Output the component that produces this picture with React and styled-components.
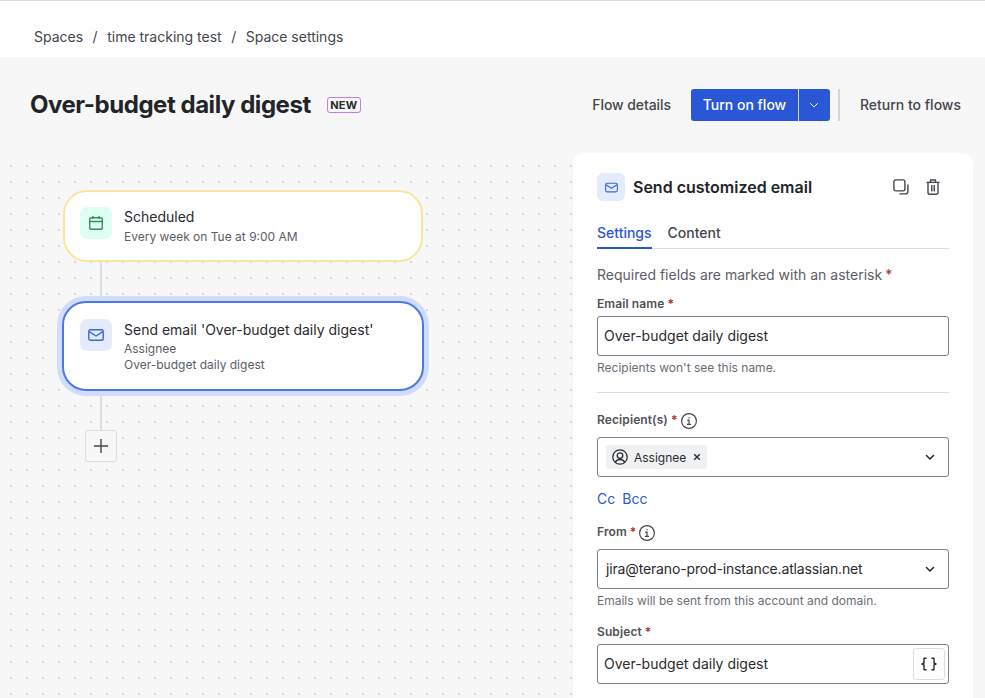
import React from 'react';
import styled, { createGlobalStyle } from 'styled-components';

const GlobalStyle = createGlobalStyle`
	html, body {
		margin: 0;
		padding: 0;
		height: 100%;
		overflow: hidden;
		background: #f7f7f7;
		font-family: Inter, "Noto Sans", sans-serif;
		color: #292a2e;
	}
	* {
		box-sizing: border-box;
	}
`;

const Page = styled.div`
	width: 985px;
	height: 698px;
	overflow: hidden;
	display: flex;
	flex-direction: column;
	background: #f7f7f7;
`;

const TopBar = styled.header`
	height: 57px;
	flex-shrink: 0;
	background: #fff;
	border-top: 1px solid #dddee1;
	padding: 27px 0 0 34px;
`;

const Breadcrumbs = styled.nav`
	display: flex;
	align-items: center;
	height: 18px;
	font-size: 14px;
	line-height: 18px;
	color: #44464d;
`;

const Slash = styled.span`
	margin: 0 9.5px;
`;

const TitleRow = styled.div`
	height: 96px;
	flex-shrink: 0;
	display: flex;
	align-items: flex-start;
	padding: 32px 24px 0 30px;
`;

const Title = styled.h1`
	margin: 0;
	font-size: 24px;
	line-height: 32px;
	font-weight: 700;
	letter-spacing: -0.46px;
	color: #232427;
`;

const NewBadge = styled.span`
	margin: 8px 0 0 16px;
	width: 34px;
	height: 16px;
	display: flex;
	align-items: center;
	justify-content: center;
	border: 1px solid #bf7fe8;
	border-radius: 3px;
	font-size: 11px;
	font-weight: 700;
	letter-spacing: 0.2px;
	color: #292a2e;
`;

const Actions = styled.div`
	margin-left: auto;
	display: flex;
	align-items: center;
	height: 32px;
`;

const TextAction = styled.span`
	padding-bottom: 2px;
	font-size: 14px;
	font-weight: 500;
	letter-spacing: ${(p) => (p.$tight ? '-0.08px' : '0')};
	color: #44464d;
`;

const SplitButton = styled.div`
	margin-left: 20px;
	display: flex;
	height: 32px;
	border-radius: 3px;
	overflow: hidden;
	background: #2a57d6;
	color: #fff;
`;

const SplitMain = styled.span`
	width: 108px;
	display: flex;
	align-items: center;
	justify-content: center;
	padding-bottom: 1px;
	font-size: 14px;
	font-weight: 500;
	border-right: 1px solid #c9d6f7;
`;

const SplitCaret = styled.span`
	width: 31px;
	padding-right: 1px;
	display: flex;
	align-items: center;
	justify-content: center;
`;

const Divider = styled.span`
	width: 2px;
	height: 32px;
	margin: 0 20px 0 8px;
	background: #d4d5d8;
`;

const Body = styled.main`
	flex: 1;
	min-height: 0;
	display: flex;
	align-items: stretch;
`;

const Canvas = styled.section`
	flex: 1;
	margin-top: 7px;
	padding: 30px 0 0 63px;
	display: flex;
	flex-direction: column;
	align-items: flex-start;
	background-image: radial-gradient(circle at 1px 1px, #d6d7da 1px, transparent 1.2px);
	background-size: 16px 16px;
	background-position: 10px 5px;
`;

const Node = styled.div`
	display: flex;
	gap: 12px;
	width: ${(p) => (p.$selected ? '362px' : '360px')};
	height: ${(p) => (p.$selected ? '90px' : '72px')};
	margin-left: ${(p) => (p.$selected ? '-1px' : '0')};
	padding: ${(p) => (p.$selected ? '16px' : '15px')} 16px 0;
	padding-left: ${(p) => (p.$selected ? '16px' : '15px')};
	border-radius: 24px;
	background: #fff;
	border: 2px solid ${(p) => (p.$selected ? '#4c78e6' : '#f8e6a0')};
	box-shadow: ${(p) => (p.$selected ? '0 0 0 5px #cfdcfb' : 'none')};
`;

const NodeIcon = styled.span`
	flex-shrink: 0;
	width: 32px;
	height: 32px;
	border-radius: 7px;
	display: flex;
	align-items: center;
	justify-content: center;
	background: ${(p) => p.$bg};
	color: ${(p) => p.$fg};
`;

const NodeText = styled.div`
	display: flex;
	flex-direction: column;
	margin-top: ${(p) => (p.$selected ? '1px' : '0')};
`;

const NodeTitle = styled.span`
	font-size: 14px;
	line-height: 20px;
	color: #292a2e;
	margin-bottom: ${(p) => (p.$selected ? '1px' : '2px')};
`;

const NodeSub = styled.span`
	font-size: 12px;
	line-height: 16px;
	color: #5c5e66;
`;

const Connector = styled.div`
	width: 2px;
	height: 39px;
	margin-left: 37px;
	background: #dcdde0;
`;

const AddButton = styled.button`
	width: 32px;
	height: 32px;
	margin-left: 22px;
	padding: 0;
	display: flex;
	align-items: center;
	justify-content: center;
	background: #f7f7f7;
	border: 1px solid #dcdde0;
	border-radius: 3px;
	color: #44464d;
`;

const Panel = styled.aside`
	width: 400px;
	margin: 0 12px 0 0;
	padding: 20px 24px 0;
	background: #fff;
	border-radius: 10px 10px 0 0;
	overflow: hidden;
`;

const PanelHead = styled.div`
	display: flex;
	align-items: center;
	height: 28px;
`;

const PanelIcon = styled.span`
	width: 28px;
	height: 28px;
	border-radius: 6px;
	display: flex;
	align-items: center;
	justify-content: center;
	background: #e4ecfc;
	color: #3a68dc;
`;

const PanelTitle = styled.h2`
	margin: 0 0 0 8px;
	font-size: 16px;
	line-height: 20px;
	font-weight: 600;
	color: #232427;
`;

const PanelTools = styled.div`
	margin-left: auto;
	margin-right: 8px;
	display: flex;
	gap: 16px;
	color: #44464d;
`;

const Tabs = styled.div`
	display: flex;
	gap: 16px;
	margin-top: 19px;
	height: 29px;
	border-bottom: 1px solid #dcdde0;
`;

const Tab = styled.span`
	height: 29px;
	padding-top: 4px;
	font-size: 14px;
	line-height: 18px;
	font-weight: 500;
	color: ${(p) => (p.$active ? '#2a57d6' : '#44464d')};
	border-bottom: ${(p) => (p.$active ? '2px solid #2a57d6' : 'none')};
`;

const Note = styled.p`
	margin: 16px 0 0;
	font-size: 14px;
	line-height: 20px;
	color: #5c5e66;
`;

const Star = styled.span`
	color: #ae2e24;
	margin-left: ${(p) => p.$gap || 3}px;
`;

const Label = styled.label`
	display: flex;
	align-items: center;
	height: 16px;
	margin-top: ${(p) => p.$top}px;
	font-size: 12px;
	font-weight: 600;
	letter-spacing: 0.1px;
	color: #505258;
`;

const InfoWrap = styled.span`
	display: flex;
	margin: 3px 0 0 3px;
	color: #44464d;
`;

const Field = styled.div`
	margin-top: ${(p) => p.$top || 5}px;
	height: 40px;
	display: flex;
	align-items: center;
	padding: 0 ${(p) => (p.$tight ? '3px' : '12px')} 0 ${(p) => p.$left || 6}px;
	border: 1px solid #7d818a;
	border-radius: 3px;
	font-size: 14px;
	color: #292a2e;
	background: #fff;
`;

const FieldValue = styled.span`
	padding-bottom: 2px;
	letter-spacing: ${(p) => p.$spacing || 0}px;
`;

const Caret = styled.span`
	margin-left: auto;
	display: flex;
	color: #292a2e;
`;

const Hint = styled.p`
	margin: 4px 0 0;
	font-size: 12px;
	line-height: 16px;
	color: #6b6e76;
`;

const Rule = styled.hr`
	margin: 16px 0 0;
	border: none;
	border-top: 1px solid #dcdde0;
`;

const Tag = styled.span`
	display: flex;
	align-items: center;
	height: 24px;
	padding: 0 6px;
	background: #f0f1f2;
	border-radius: 2px;
	font-size: 12px;
	color: #292a2e;
`;

const TagName = styled.span`
	margin: 0 7px 0 6px;
`;

const Links = styled.div`
	display: flex;
	gap: 7px;
	margin-top: 11px;
	height: 20px;
	align-items: center;
	font-size: 14px;
	color: #2a57d6;
`;

const BraceButton = styled.span`
	margin-left: auto;
	width: 32px;
	height: 32px;
	display: flex;
	align-items: center;
	justify-content: center;
	border: 1px solid #dcdde0;
	border-radius: 3px;
	color: #292a2e;
`;

const MailIcon = ({ size = 16 }) => (
	<svg width={size} height={size} viewBox="0 0 16 16" fill="none" stroke="currentColor" strokeWidth="1.4" strokeLinejoin="round">
		<rect x="0.8" y="2.7" width="14.4" height="10.6" rx="1.8" />
		<path d="M1.2 4.6 8 9l6.8-4.4" />
	</svg>
);

const CalendarIcon = () => (
	<svg width="16" height="16" viewBox="0 0 16 16" fill="none" stroke="currentColor" strokeWidth="1.4">
		<rect x="1.7" y="2.7" width="12.6" height="11.6" rx="1.8" />
		<path d="M1.7 6.5h12.6M5 1v3M11 1v3" />
	</svg>
);

const ChevronIcon = ({ size = 12, weight = 1.5 }) => (
	<svg width={size} height={size} viewBox="0 0 12 12" fill="none" stroke="currentColor" strokeWidth={weight} strokeLinecap="round" strokeLinejoin="round">
		<path d="M2.5 4.5 6 8l3.5-3.5" />
	</svg>
);

const CopyIcon = () => (
	<svg width="16" height="16" viewBox="0 0 16 16" fill="none" stroke="currentColor" strokeWidth="1.4" strokeLinecap="round">
		<rect x="0.9" y="0.9" width="11" height="11" rx="1.8" />
		<path d="M14.9 6v6.5a2.4 2.4 0 0 1-2.4 2.4H7" />
	</svg>
);

const TrashIcon = () => (
	<svg width="16" height="16" viewBox="0 0 16 16" fill="none" stroke="currentColor" strokeWidth="1.4" strokeLinejoin="round">
		<path d="M1.5 3.4h13M5.5 3.4V1h5v2.4M3 3.4v10a1.8 1.8 0 0 0 1.8 1.8h6.4a1.8 1.8 0 0 0 1.8-1.8v-10M6.8 6v6.4M9.2 6v6.4" />
	</svg>
);

const InfoIcon = () => (
	<svg width="16" height="16" viewBox="0 0 16 16" fill="none" stroke="currentColor" strokeWidth="1.2" strokeLinecap="round">
		<circle cx="8" cy="8" r="7.4" />
		<path d="M6.6 7.2H8v4.2M6.4 11.4h3.2" />
		<circle cx="8" cy="4.7" r="0.7" fill="currentColor" stroke="none" />
	</svg>
);

const PersonIcon = () => (
	<svg width="16" height="16" viewBox="0 0 16 16" fill="none" stroke="currentColor" strokeWidth="1.3">
		<circle cx="8" cy="8" r="7.2" />
		<circle cx="8" cy="6.6" r="2.8" />
		<path d="M3.4 13.2c.8-1.8 2.5-2.7 4.6-2.7s3.8.9 4.6 2.7" />
	</svg>
);

const CloseIcon = () => (
	<svg width="8" height="8" viewBox="0 0 8 8" fill="none" stroke="currentColor" strokeWidth="1.4">
		<path d="M1.2 1.2 6.8 6.8M6.8 1.2 1.2 6.8" />
	</svg>
);

const PlusIcon = () => (
	<svg width="16" height="16" viewBox="0 0 16 16" fill="none" stroke="currentColor" strokeWidth="1.4">
		<path d="M8 1v14M1 8h14" />
	</svg>
);

const BracesIcon = () => (
	<svg width="16" height="16" viewBox="0 0 16 16" fill="none" stroke="currentColor" strokeWidth="1.4" strokeLinejoin="round">
		<path d="M5.5 2.3H3V7L1 8l2 1v4.7h2.5M10.5 2.3H13V7l2 1-2 1v4.7h-2.5" />
	</svg>
);

const App = () => (
	<Page>
		<GlobalStyle />
		<TopBar>
			<Breadcrumbs>
				Spaces<Slash>/</Slash>time tracking test<Slash>/</Slash>Space settings
			</Breadcrumbs>
		</TopBar>
		<TitleRow>
			<Title>Over-budget daily digest</Title>
			<NewBadge>NEW</NewBadge>
			<Actions>
				<TextAction $tight>Flow details</TextAction>
				<SplitButton>
					<SplitMain>Turn on flow</SplitMain>
					<SplitCaret>
						<ChevronIcon weight={1} />
					</SplitCaret>
				</SplitButton>
				<Divider />
				<TextAction>Return to flows</TextAction>
			</Actions>
		</TitleRow>
		<Body>
			<Canvas>
				<Node>
					<NodeIcon $bg="#dcfff1" $fg="#3c8a5c">
						<CalendarIcon />
					</NodeIcon>
					<NodeText>
						<NodeTitle>Scheduled</NodeTitle>
						<NodeSub>Every week on Tue at 9:00 AM</NodeSub>
					</NodeText>
				</Node>
				<Connector />
				<Node $selected>
					<NodeIcon $bg="#e4ecfc" $fg="#3a68dc">
						<MailIcon />
					</NodeIcon>
					<NodeText $selected>
						<NodeTitle $selected>Send email 'Over-budget daily digest'</NodeTitle>
						<NodeSub>Assignee</NodeSub>
						<NodeSub>Over-budget daily digest</NodeSub>
					</NodeText>
				</Node>
				<Connector />
				<AddButton>
					<PlusIcon />
				</AddButton>
			</Canvas>
			<Panel>
				<PanelHead>
					<PanelIcon>
						<MailIcon size={13} />
					</PanelIcon>
					<PanelTitle>Send customized email</PanelTitle>
					<PanelTools>
						<CopyIcon />
						<TrashIcon />
					</PanelTools>
				</PanelHead>
				<Tabs>
					<Tab $active>Settings</Tab>
					<Tab>Content</Tab>
				</Tabs>
				<Note>
					Required fields are marked with an asterisk<Star $gap={3}>*</Star>
				</Note>
				<Label $top={10}>
					Email name<Star>*</Star>
				</Label>
				<Field>
					<FieldValue>Over-budget daily digest</FieldValue>
				</Field>
				<Hint>Recipients won't see this name.</Hint>
				<Rule />
				<Label $top={18}>
					Recipient(s)<Star>*</Star>
					<InfoWrap>
						<InfoIcon />
					</InfoWrap>
				</Label>
				<Field $top={10} $left={8}>
					<Tag>
						<PersonIcon />
						<TagName>Assignee</TagName>
						<CloseIcon />
					</Tag>
					<Caret>
						<ChevronIcon />
					</Caret>
				</Field>
				<Links>
					<span>Cc</span>
					<span>Bcc</span>
				</Links>
				<Label $top={15}>
					From<Star>*</Star>
					<InfoWrap>
						<InfoIcon />
					</InfoWrap>
				</Label>
				<Field $top={10} $left={8}>
					<FieldValue $spacing={-0.15}>jira@terano-prod-instance.atlassian.net</FieldValue>
					<Caret>
						<ChevronIcon />
					</Caret>
				</Field>
				<Hint>Emails will be sent from this account and domain.</Hint>
				<Label $top={14}>
					Subject<Star>*</Star>
				</Label>
				<Field $tight>
					<FieldValue>Over-budget daily digest</FieldValue>
					<BraceButton>
						<BracesIcon />
					</BraceButton>
				</Field>
			</Panel>
		</Body>
	</Page>
);

export default App;
